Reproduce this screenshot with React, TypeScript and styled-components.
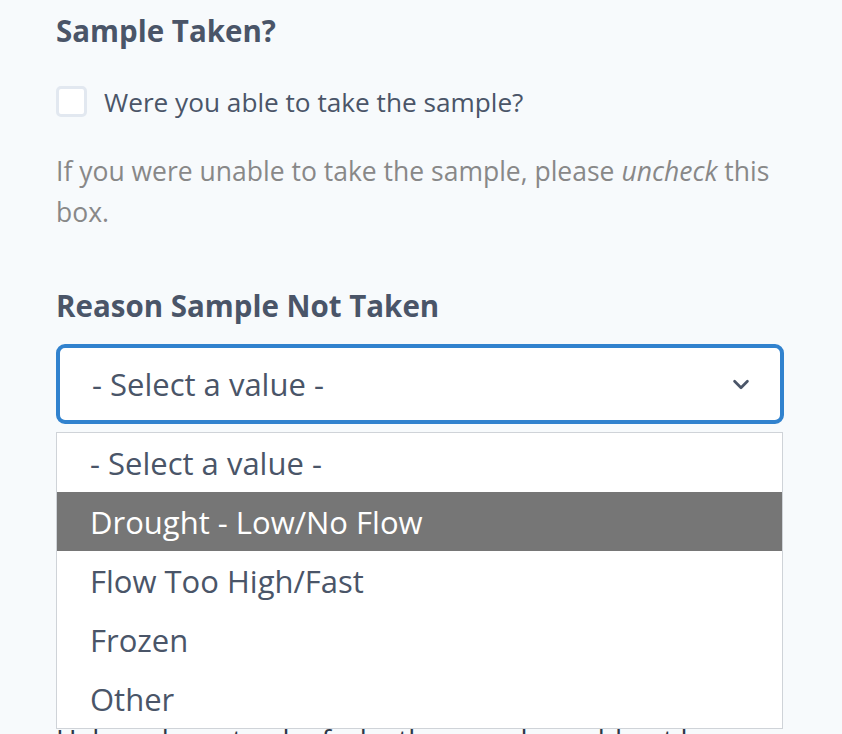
import styled, { createGlobalStyle } from "styled-components";
import { useState } from "react";

const GlobalStyle = createGlobalStyle`
  html, body {
    margin: 0;
    padding: 0;
    background: #f7fafc;
    font-family: "Open Sans", "Noto Sans", sans-serif;
  }
`;

const options = [
  "- Select a value -",
  "Drought - Low/No Flow",
  "Flow Too High/Fast",
  "Frozen",
  "Other",
];

const App = () => {
  const [hovered, setHovered] = useState(1);

  return (
    <>
      <GlobalStyle />
      <Page>
        <Heading>Sample Taken?</Heading>
        <CheckRow>
          <CheckBox />
          <CheckLabel>Were you able to take the sample?</CheckLabel>
        </CheckRow>
        <Help>
          If you were unable to take the sample, please <em>uncheck</em> this
          box.
        </Help>

        <Heading $top={54}>Reason Sample Not Taken</Heading>
        <SelectWrap>
          <SelectBox>
            <span>- Select a value -</span>
            <svg width="22" height="22" viewBox="0 0 24 24" fill="none">
              <path
                d="M5 9l7 7 7-7"
                stroke="#4a5568"
                strokeWidth="3"
                strokeLinecap="round"
                strokeLinejoin="round"
              />
            </svg>
          </SelectBox>
          <Menu>
            {options.map((o, i) => (
              <Option
                key={o}
                $active={i === hovered}
                onMouseEnter={() => setHovered(i)}
              >
                {o}
              </Option>
            ))}
          </Menu>
        </SelectWrap>
        <Behind>Help us keep track of why the sample could not be taken.</Behind>
      </Page>
    </>
  );
};

const Page = styled.main`
  padding: 12px 58px 0 56px;
  height: 734px;
  box-sizing: border-box;
  overflow: hidden;
  color: #4a5568;
`;

const Heading = styled.h2<{ $top?: number }>`
  margin: ${(p) => p.$top ?? 0}px 0 0;
  font-size: 29.5px;
  font-weight: 700;
  line-height: 38px;
  color: #4a5568;
`;

const CheckRow = styled.label`
  display: flex;
  align-items: center;
  gap: 17px;
  margin-top: 34px;
  height: 35px;
`;

const CheckBox = styled.span`
  width: 25px;
  height: 25px;
  border: 3px solid #e2e8f0;
  border-radius: 5px;
  background: #fff;
  flex: none;
`;

const CheckLabel = styled.span`
  font-size: 26.2px;
  color: #4a5568;
`;

const Help = styled.p`
  margin: 32px 0 0;
  font-size: 26.5px;
  line-height: 41px;
  color: #888;
  width: 728px;

  em {
    font-style: italic;
  }
`;

const SelectWrap = styled.div`
  position: relative;
  margin-top: 19px;
`;

const SelectBox = styled.div`
  display: flex;
  align-items: center;
  justify-content: space-between;
  height: 80px;
  box-sizing: border-box;
  border: 4px solid #3182ce;
  border-radius: 9px;
  background: #fff;
  padding: 0 28px 0 32px;
  font-size: 31px;
  color: #4a5568;
`;

const Menu = styled.ul`
  position: absolute;
  left: 0;
  top: 88px;
  width: 727px;
  margin: 0;
  padding: 0;
  list-style: none;
  background: #fff;
  border: 1px solid #cfd3d8;
  box-sizing: border-box;
  z-index: 2;
`;

const Option = styled.li<{ $active: boolean }>`
  height: 59px;
  display: flex;
  align-items: center;
  padding-left: 33px;
  font-size: 31px;
  background: ${(p) => (p.$active ? "#767676" : "#fff")};
  color: ${(p) => (p.$active ? "#fff" : "#4a5568")};
`;

const Behind = styled.p`
  margin: 296px 0 0;
  font-size: 28px;
  line-height: 38px;
  color: #2d3748;
`;

export default App;
